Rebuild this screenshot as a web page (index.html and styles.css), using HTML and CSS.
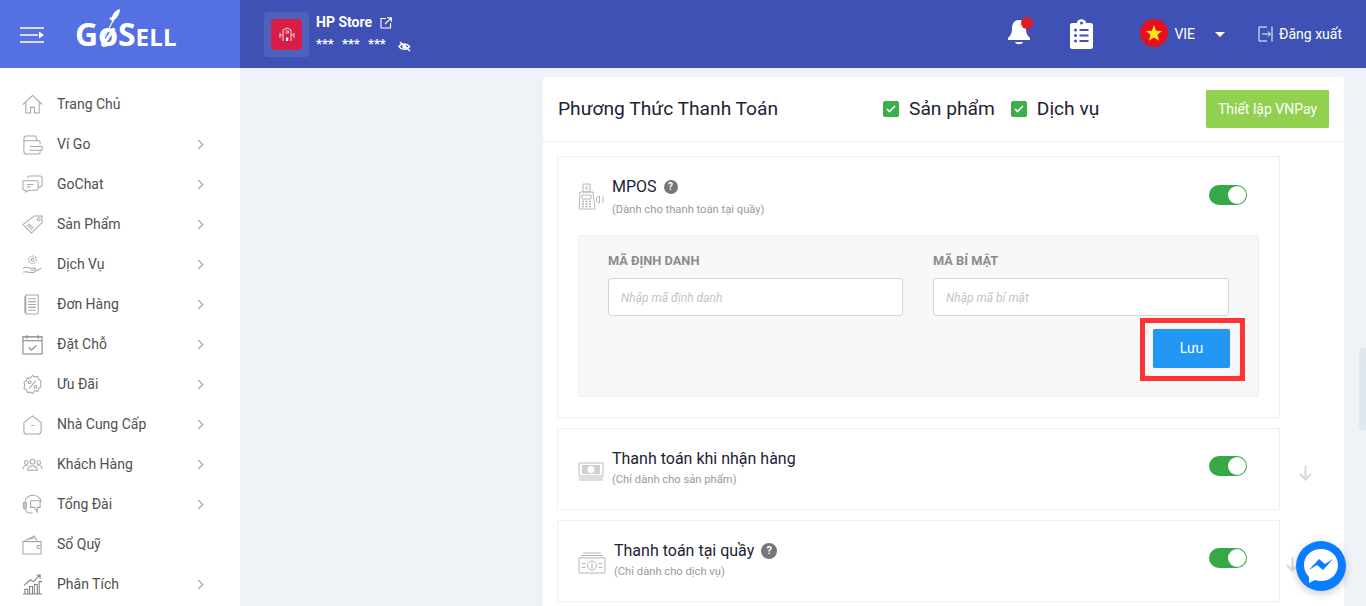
FILE: index.html
```html
<!DOCTYPE html>
<html lang="vi">
<head>
<meta charset="utf-8">
<title>GoSell</title>
<link rel="stylesheet" href="styles.css">
</head>
<body>
<header class="topbar">
  <div class="brand">
    <svg class="burger" width="25" height="16" viewBox="0 0 25 16"><path d="M0 1h24M0 8h18M0 15h24" stroke="#fff" stroke-width="1.6" fill="none"/><path d="M19 4.500l5 3.500-5 3.500z" fill="#fff"/></svg>
    <div class="logo"><span class="logo-big">G</span><span class="logo-o"><span class="logo-big">ø</span><svg class="rocket" width="24" height="40" viewBox="0 0 24 40"><path d="M20 3L6 30c-2 4-3 7-1 8 3 1 6-1 8-5" fill="none" stroke="#fff" stroke-width="1.200"/><path d="M22 1c-4 1-7 4-8 8l-3 1 1 1 2 2 1 2 1-3c3-2 6-6 6-11z" fill="#fff"/></svg></span><span class="logo-big">S</span><span class="logo-small">ELL</span></div>
  </div>
  <div class="topbar-main">
    <div class="store-thumb"><div class="store-icon"><svg width="16" height="16" viewBox="0 0 16 16" fill="none" stroke="#fff" stroke-width=".8"><path d="M4 3L8 1l4 2M4 3v11M12 3v11M1 8h3M12 8h3M1 6v5M15 6v5M6.500 4h3v2h-3"/><rect x="7" y="10.500" width="2.200" height="3.500" fill="#fff" stroke="none"/></svg></div></div>
    <div class="store-info">
      <div class="store-name">HP Store <svg class="ext" width="12" height="12" viewBox="0 0 12 12" fill="none" stroke="#fff" stroke-width="1.100"><path d="M6 1.500H1v9.500h9.500V6M7 .7h4.300V5M11 1L5 7"/></svg></div>
      <div class="store-mask"><span>***</span><span>***</span><span>***</span><svg width="13" height="11" viewBox="0 0 13 11" fill="none" stroke="#fff" stroke-width="1.500"><path d="M1 5.500C3 2.500 9 2 11.500 5.500 9 9 3 9 1 5.500z"/><circle cx="6.300" cy="5.500" r="1.300"/><path d="M2 1l10 9"/></svg></div>
    </div>
    <div class="top-actions">
      <div class="bell"><svg width="24" height="29" viewBox="0 0 24 29"><path d="M12 2c5 0 7 4 7 9 0 5 2 7 4 9v2H1v-2c2-2 4-4 4-9s2-9 7-9z" fill="#fff"/><path d="M8 24h8c-1 3-7 3-8 0z" fill="#fff"/></svg><i class="bell-dot"></i></div>
      <svg class="clip" width="23" height="30" viewBox="0 0 23 30"><path d="M2 4h5c0-5 9-5 9 0h5c1 0 2 1 2 2v22c0 1-1 2-2 2H2c-1 0-2-1-2-2V6c0-1 1-2 2-2z" fill="#fff"/><g fill="#3f51b5"><circle cx="11.500" cy="4" r="1.500"/><rect x="9.500" y="10" width="9" height="2"/><rect x="9.500" y="15.500" width="9" height="2"/><rect x="9.500" y="21" width="9" height="2"/><circle cx="5.500" cy="11" r="1.500"/><circle cx="5.500" cy="16.500" r="1.500"/><circle cx="5.500" cy="22" r="1.500"/></g></svg>
      <div class="lang"><svg class="flag" width="28" height="28" viewBox="0 0 28 28"><circle cx="14" cy="14" r="14" fill="#e60f1c"/><path d="M14 6l2.200 5.800 6 .2-4.700 3.800 1.600 6L14 18.400 8.900 21.800l1.600-6L5.800 12l6-.2z" fill="#fee21a"/></svg><span class="lang-code">VIE</span><i class="caret"></i></div>
      <div class="logout"><svg width="15" height="16" viewBox="0 0 15 16" fill="none" stroke="#fff" stroke-width="1"><path d="M9 1H1v14h8M4 8h8M10 5.500L12.500 8 10 10.500M14 .500v15"/></svg><span>Đăng xuất</span></div>
    </div>
  </div>
</header>

<div class="layout">
  <nav class="sidebar">
    <a class="nav-item"><svg class="nav-ic" viewBox="0 0 22 22"><path d="M1 11L11 1.500 21 11M4 9v11h5v-6h4v6h5V9"/></svg><span class="nav-label">Trang Chủ</span></a>
    <a class="nav-item"><svg class="nav-ic" viewBox="0 0 22 22"><path d="M2 8V5c0-2 1-3 3-3h9l2 5M2 8v10c0 2 1 3 3 3h12c1 0 2-1 2-2v-2M2 8c0-1 1-1 2-1h13c1 0 2 1 2 2v2M8 13h13v4H8"/></svg><span class="nav-label">Ví Go</span><i class="chev"></i></a>
    <a class="nav-item"><svg class="nav-ic" viewBox="0 0 22 22"><path d="M2 7h13c1 0 2 1 2 2v6c0 1-1 2-2 2H7l-3 2v-2H2c-1 0-1-1-1-2V8c0-1 0-1 1-1zM6 4c0-1 1-2 2-2h11c1 0 2 1 2 2v7c0 2-1 3-4 3M5 11h7M5 13.500h4"/></svg><span class="nav-label">GoChat</span><i class="chev"></i></a>
    <a class="nav-item"><svg class="nav-ic" viewBox="0 0 22 22"><path d="M13 2h8v7L10 20 1 11zM17.500 5.500m-1.500 0a1.500 1.500 0 1 0 3 0a1.500 1.500 0 1 0-3 0M7 10l5 5M5.500 11.500l5 5"/></svg><span class="nav-label">Sản Phẩm</span><i class="chev"></i></a>
    <a class="nav-item"><svg class="nav-ic" viewBox="0 0 22 22"><circle cx="11" cy="6" r="4" stroke-dasharray="2 1"/><circle cx="11" cy="6" r="1.500"/><path d="M1 15c3-2 6-1 8 0h4c2 0 2 2 0 2H9M1 19c5-2 8 2 12 0l7-4"/></svg><span class="nav-label">Dịch Vụ</span><i class="chev"></i></a>
    <a class="nav-item"><svg class="nav-ic" viewBox="0 0 22 22"><path d="M4 1h13v18c0 1-1 2-2 2H4zM6.500 5h8M6.500 8h8M6.500 11h8M6.500 14h8M6.500 17h8M4 3H3v17"/></svg><span class="nav-label">Đơn Hàng</span><i class="chev"></i></a>
    <a class="nav-item"><svg class="nav-ic dark" viewBox="0 0 22 22"><path d="M1 3h20v18H1zM1 7h20M5 1v4M17 1v4M7 14l3 3 5-5"/></svg><span class="nav-label">Đặt Chỗ</span><i class="chev"></i></a>
    <a class="nav-item"><svg class="nav-ic" viewBox="0 0 22 22"><path d="M11 1.500l2.500 1.500 3-.300 1 2.800 2.500 1.800-.8 3 .8 3-2.500 1.800-1 2.800-3-.300L11 20.500l-2.500-1.500-3 .300-1-2.800L2 14.700l.8-3-.8-3 2.500-1.800 1-2.800 3 .300zM7.500 15L14.500 7"/><circle cx="8" cy="8.500" r="1.500"/><circle cx="14" cy="13.500" r="1.500"/></svg><span class="nav-label">Ưu Đãi</span><i class="chev"></i></a>
    <a class="nav-item"><svg class="nav-ic" viewBox="0 0 22 22"><path d="M2 9l9-7 9 7v9c0 2-1 3-3 3H5c-2 0-3-1-3-3zM9.500 12h3"/></svg><span class="nav-label">Nhà Cung Cấp</span><i class="chev"></i></a>
    <a class="nav-item"><svg class="nav-ic" viewBox="0 0 22 22"><circle cx="11" cy="8" r="2.500"/><circle cx="4.500" cy="9" r="2"/><circle cx="17.500" cy="9" r="2"/><path d="M6 17c0-6 10-6 10 0zM1 16c0-4 3-5 5-4M21 16c0-4-3-5-5-4"/></svg><span class="nav-label">Khách Hàng</span><i class="chev"></i></a>
    <a class="nav-item"><svg class="nav-ic" viewBox="0 0 22 22"><path d="M3 9c0-10 16-10 17-1M3 9H1.500v6H3zM3 9h1.500v6H3M3 15c0 3 3 5 6 5h2M9 7h10v7h-3v5l-3-5H9z"/></svg><span class="nav-label">Tổng Đài</span><i class="chev"></i></a>
    <a class="nav-item"><svg class="nav-ic" viewBox="0 0 22 22"><path d="M1 8h19v13H1zM1 8l12-6 3 6M5 6l8-2M20 12h-4v3h4"/></svg><span class="nav-label">Sổ Quỹ</span></a>
    <a class="nav-item"><svg class="nav-ic dark" viewBox="0 0 22 22"><path d="M1 21h20M3 21v-5h3v5M8 21v-8h3v8M13 21v-10h3v10M18 21V8h3M2 12l7-6 3 2 7-7M15 1h4v4"/></svg><span class="nav-label">Phân Tích</span><i class="chev"></i></a>
  </nav>

  <main class="main">
    <section class="card">
      <div class="card-head">
        <h1 class="card-title">Phương Thức Thanh Toán</h1>
        <div class="filters">
          <label class="filter"><i class="check"><svg width="10" height="8" viewBox="0 0 10 8"><path d="M1 4l2.500 2.500L9 1" fill="none" stroke="#fff" stroke-width="1.600"/></svg></i>Sản phẩm</label>
          <label class="filter"><i class="check"><svg width="10" height="8" viewBox="0 0 10 8"><path d="M1 4l2.500 2.500L9 1" fill="none" stroke="#fff" stroke-width="1.600"/></svg></i>Dịch vụ</label>
        </div>
        <button class="btn btn-vnpay">Thiết lập VNPay</button>
      </div>
      <div class="card-body">
        <div class="method method-open">
          <div class="method-row">
            <svg class="method-ic" width="26" height="27" viewBox="0 0 26 27" fill="none" stroke="#b5b5b5" stroke-width="1"><path d="M5 1h7v8H5zM7 4h3M7 6h3M2 9h13l2 17H1zM4 12h9v4H4z"/><path d="M4 18.500h2M7.500 18.500h2M11 18.500h2M4 21h2M7.500 21h2M11 21h2M4 23.500h2M7.500 23.500h2M11 23.500h2" stroke-width="1.400"/><path d="M21.500 13v7l-3-2v-3zM24.500 13c1 2 1 5 0 7"/></svg>
            <div class="method-text">
              <div class="method-title">MPOS <i class="help">?</i></div>
              <div class="method-sub">(Dành cho thanh toán tại quầy)</div>
            </div>
            <span class="switch"></span>
          </div>
          <div class="method-form">
            <div class="fields">
              <div class="field field-a"><label class="field-label">MÃ ĐỊNH DANH</label><input class="field-input" placeholder="Nhập mã định danh"></div>
              <div class="field field-b"><label class="field-label">MÃ BÍ MẬT</label><input class="field-input" placeholder="Nhập mã bí mật"></div>
            </div>
            <div class="form-foot"><button class="btn btn-save">Lưu</button></div>
          </div>
        </div>
        <div class="method-wrap">
          <div class="method method-closed">
            <svg class="method-ic" width="26" height="20" viewBox="0 0 26 20" fill="none" stroke="#bdbdbd" stroke-width="1"><path d="M1 2h24v13H1zM1 17h24M1 19h24"/><rect x="4" y="4" width="18" height="9" fill="#d0d0d0" stroke="none"/><circle cx="13" cy="8.500" r="3.500" fill="#fff" stroke="none"/></svg>
            <div class="method-text">
              <div class="method-title">Thanh toán khi nhận hàng</div>
              <div class="method-sub">(Chỉ dành cho sản phẩm)</div>
            </div>
            <span class="switch"></span>
          </div>
          <svg class="arrow" width="13" height="15" viewBox="0 0 13 15" fill="none" stroke="#d9d9d9" stroke-width="2"><path d="M6.500 0v13M1 8l5.500 5.500L12 8"/></svg>
        </div>
        <div class="method-wrap">
          <div class="method method-closed method-cash">
            <svg class="method-ic" width="28" height="22" viewBox="0 0 28 22" fill="none" stroke="#b5b5b5" stroke-width="1"><path d="M5 1h18M3 3.500h22M1 6h26v15H1z"/><circle cx="14" cy="13.500" r="4.500"/><path d="M14 10.500v6M3.500 11.500h4M3.500 15.500h4M20.500 11.500h4M20.500 15.500h4"/></svg>
            <div class="method-text">
              <div class="method-title">Thanh toán tại quầy <i class="help help-lg">?</i></div>
              <div class="method-sub">(Chỉ dành cho dịch vụ)</div>
            </div>
            <span class="switch"></span>
          </div>
          <svg class="arrow arrow-low" width="13" height="15" viewBox="0 0 13 15" fill="none" stroke="#d9d9d9" stroke-width="2"><path d="M6.500 0v13M1 8l5.500 5.500L12 8"/></svg>
        </div>
      </div>
    </section>
  </main>
</div>

<div class="highlight"></div>
<div class="scroll-thumb"></div>
<a class="messenger"><svg width="38" height="38" viewBox="0 0 38 38"><path d="M19 2C9 2 2 9 2 18c0 5 2 9 5 12v6l6-3c2 .5 4 1 6 1 10 0 17-7 17-16S29 2 19 2z" fill="#fff"/><path d="M7 23l10-11 6 5 8-5-10 11-6-5z" fill="#0a7cff"/></svg></a>
</body>
</html>
```
FILE: styles.css
```css
* { box-sizing: border-box; }
html, body { margin: 0; height: 606px; overflow: hidden; }
body { font-family: Roboto, "Liberation Sans", sans-serif; color: #333; background: #eff3f8; display: flex; flex-direction: column; }

.topbar { height: 68px; flex: none; display: flex; color: #fff; background: #3f51b5; }
.brand { width: 240px; flex: none; background: #5470e3; display: flex; align-items: center; padding-left: 20px; }
.burger { flex: none; margin-top: 2px; }
.logo { margin-left: 30px; display: flex; align-items: baseline; font-family: "Open Sans", sans-serif; font-weight: 700; line-height: 1; margin-top: 0; }
.logo-big { font-size: 32px; }
.logo-small { font-size: 24px; letter-spacing: .2px; }
.logo-o { position: relative; }
.rocket { position: absolute; left: 0; top: -10px; }
.topbar-main { flex: 1; display: flex; align-items: center; padding: 0 24px; }
.store-thumb { width: 45px; height: 45px; margin-top: 1px; padding: 7px; background: #5060bd; border-radius: 4px; }
.store-icon { width: 31px; height: 31px; background: #d81e46; border-radius: 4px; display: flex; align-items: center; justify-content: center; }
.store-info { margin-left: 7px; }
.store-name { font-size: 14px; font-weight: 700; display: flex; align-items: center; gap: 8px; height: 20px; margin-top: -5px; }
.ext { margin-top: 3px; }
.store-mask { font-size: 13px; font-weight: 700; display: flex; align-items: center; margin-top: 4px; height: 16px; }
.store-mask span { width: 26px; }
.store-mask svg { margin-left: 4px; margin-top: 5px; }
.top-actions { margin-left: auto; display: flex; align-items: center; }
.bell { position: relative; width: 24px; height: 29px; margin-top: -3px; }
.bell svg { display: block; }
.bell-dot { position: absolute; left: 14px; top: -1px; width: 12px; height: 12px; border-radius: 50%; background: #e21b23; }
.clip { margin-left: 39px; margin-top: -1px; }
.lang { display: flex; align-items: center; margin-left: 47px; margin-right: 33px; }
.flag { margin-top: -2px; }
.lang-code { font-size: 14px; margin-left: 6px; }
.caret { margin-left: 20px; width: 0; height: 0; border: 5px solid transparent; border-top: 5px solid #fff; border-bottom: 0; }
.logout { display: flex; align-items: center; gap: 6px; font-size: 14px; }

.layout { flex: 1; display: flex; min-height: 0; }
.sidebar { width: 240px; flex: none; background: #fff; padding-top: 16px; overflow: hidden; }
.nav-item { height: 40px; display: flex; align-items: center; padding-left: 22px; font-size: 14px; color: #4f4f4f; }
.nav-ic { width: 21px; height: 21px; flex: none; fill: none; stroke: #a8a8a8; stroke-width: 1.100; }
.nav-ic.dark { stroke: #808080; }
.nav-label { margin-left: 14px; flex: 1; }
.chev { width: 7px; height: 7px; margin-right: 38px; border-top: 1.4px solid #999; border-right: 1.4px solid #999; transform: rotate(45deg); }

.main { flex: 1; padding: 9px 22px 0 303px; min-width: 0; }
.card { background: #fff; border-radius: 4px 4px 0 0; height: 540px; overflow: hidden; }
.card-head { height: 65px; padding: 13px 15px 0; display: flex; align-items: flex-start; border-bottom: 1px solid #eceff6; }
.card-title { margin: 0; width: 325px; font-size: 19.200px; font-weight: 400; color: #202334; line-height: 37px; white-space: nowrap; }
.filters { display: flex; gap: 16px; height: 37px; align-items: center; }
.filter { display: flex; align-items: center; gap: 10px; font-size: 19.200px; color: #202334; }
.check { width: 16px; height: 16px; border-radius: 2px; background: #3aaf4a; display: flex; align-items: center; justify-content: center; }
.btn { border: 0; font-family: inherit; color: #fff; border-radius: 2px; font-size: 14px; padding: 0; }
.btn-vnpay { margin-left: auto; width: 123px; height: 38px; background: #92d050; box-shadow: 0 0 1px rgba(0,0,0,.25); }
.card-body { padding: 14px 15px 0 14px; display: flex; flex-direction: column; gap: 10px; }
.method { width: 723px; border: 1px solid #eceff6; }
.method-open { height: 262px; padding: 0 20px; }
.method-row { height: 78px; display: flex; align-items: center; }
.method-ic { flex: none; }
.method-text { margin-left: 8px; }
.method-row .method-text { margin-top: 5px; }
.method-title { font-size: 16px; color: #202334; display: flex; align-items: center; gap: 7px; line-height: 20px; margin-top: -3px; }
.method-sub { font-size: 11.200px; color: #9a9a9a; line-height: 14px; margin-top: 4px; }
.method-row .method-sub { margin-top: 6px; }
.help { width: 14px; height: 14px; border-radius: 50%; background: #777; color: #fff; font-size: 10px; font-weight: 700; font-style: normal; text-align: center; line-height: 14px; }
.help-lg { width: 16px; height: 16px; line-height: 16px; font-size: 11px; }
.switch { margin-left: auto; margin-right: 12px; width: 38px; height: 20px; border-radius: 10px; background: #35a947; position: relative; flex: none; }
.method-row .switch { margin-top: -2px; }
.method-closed .switch { margin-top: -6px; }
.switch::after { content: ""; position: absolute; right: 1px; top: 1px; width: 18px; height: 18px; border-radius: 50%; background: #fff; }
.method-form { height: 162px; background: #f8f8f8; border: 1px solid #eceff6; border-radius: 2px; padding: 15px 29px 0; }
.fields { display: flex; gap: 30px; }
.field-a { flex: 0 0 295px; }
.field-b { flex: 0 0 296px; }
.field-label { display: block; font-size: 12.800px; font-weight: 700; color: #8b8b8b; line-height: 20px; margin-bottom: 7px; }
.field-input { display: block; width: 100%; height: 38px; padding: 2px 12px 0; border: 1px solid #cfd6df; border-radius: 3px; background: #fff; font: italic 12px Roboto, sans-serif; outline: none; }
.field-input::placeholder { color: #c4c4c4; opacity: 1; }
.form-foot { display: flex; justify-content: flex-end; padding-top: 13px; }
.btn-save { width: 77px; height: 39px; padding-bottom: 2px; background: #2196f3; margin-right: -1px; box-shadow: 0 0 1px rgba(0,0,0,.3); }
.method-wrap { position: relative; }
.method-closed { height: 82px; padding: 0 20px; display: flex; align-items: center; }
.method-closed .method-text { margin-left: 8px; margin-top: 1px; }
.method-closed .method-ic { margin-top: 4px; }
.arrow { position: absolute; left: 742px; top: 38px; }
.arrow-low { left: 729px; top: 37px; }

.highlight { position: absolute; left: 1140px; top: 318px; width: 105px; height: 63px; border: 5px solid #ff3333; }
.scroll-thumb { position: absolute; left: 1359px; top: 348px; width: 7px; height: 82px; background: #e1e7ef; border-radius: 4px 0 0 4px; }
.messenger { position: absolute; left: 1296px; top: 541px; width: 50px; height: 50px; border-radius: 50%; background: #0a7cff; box-shadow: 0 3px 8px rgba(0,0,0,.2); display: flex; align-items: center; justify-content: center; }
```
